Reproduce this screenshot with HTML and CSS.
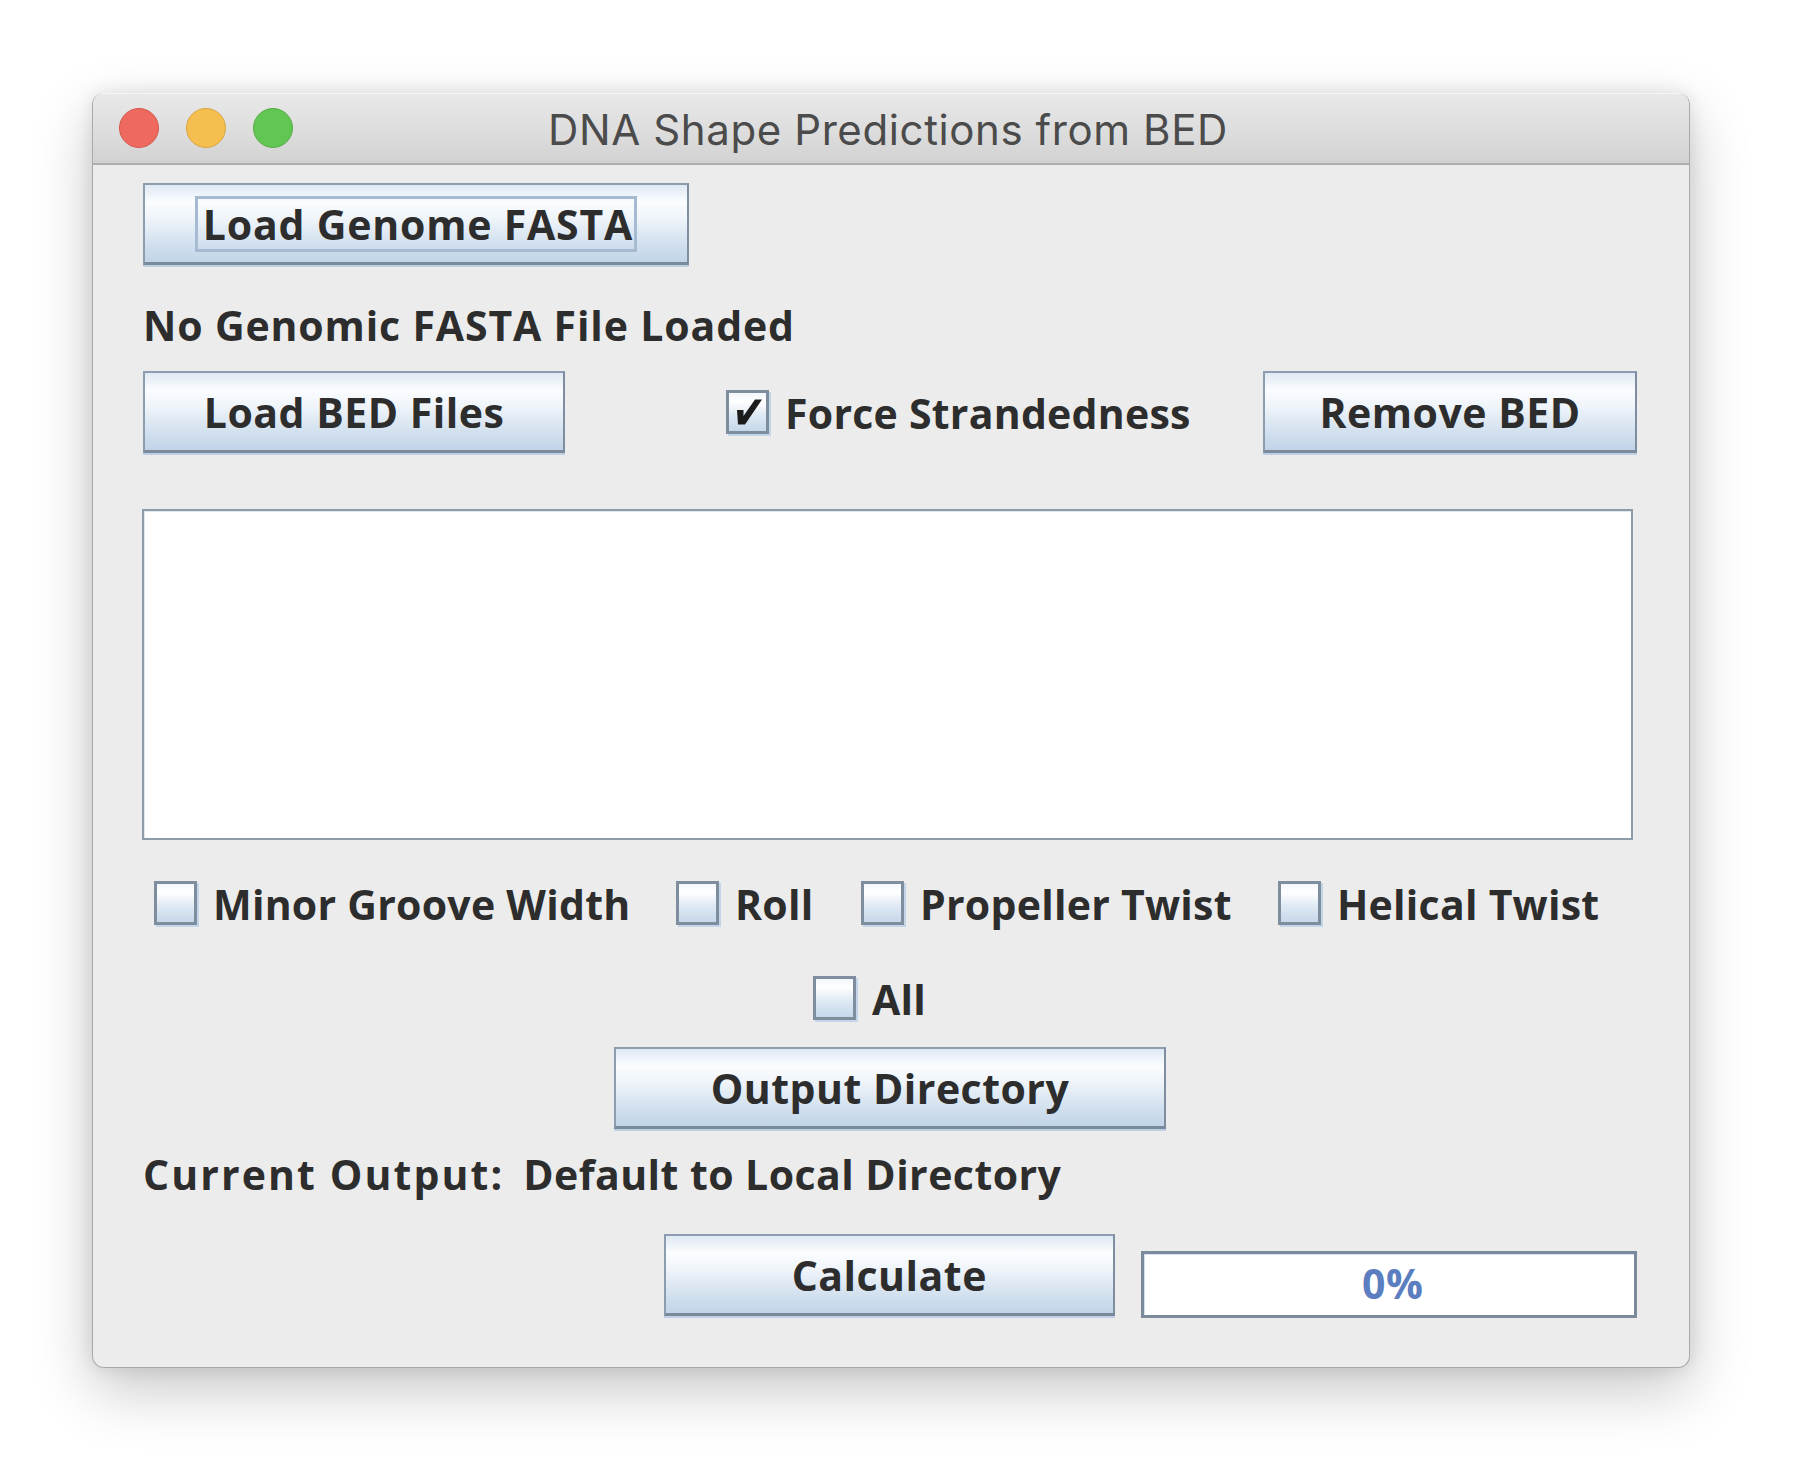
FILE: index.html
```html
<!DOCTYPE html>
<html lang="en">
<head>
<meta charset="utf-8">
<title>DNA Shape Predictions from BED</title>
<link rel="stylesheet" href="styles.css">
</head>
<body>
<div class="window">
  <div class="titlebar">
    <div class="lights">
      <span class="light red"></span>
      <span class="light yellow"></span>
      <span class="light green"></span>
    </div>
    <div class="title">DNA Shape Predictions from BED</div>
    <div></div>
  </div>
  <div class="content">
    <div class="btn btn-genome"><span class="focus">Load Genome FASTA</span></div>
    <div class="label label-genome">No Genomic FASTA File Loaded</div>
    <div class="row-bed">
      <div class="btn btn-bed">Load BED Files</div>
      <div class="check check-force">
        <span class="box checked"><svg viewBox="0 0 43 44" width="43" height="44"><path d="M11 20 L17.5 20 L17.5 26 L29 9.5 L36 9.5 L19 34.5 L12 34.5 Z" fill="#1c1c1c"/></svg></span>
        <span class="check-text">Force Strandedness</span>
      </div>
      <div class="btn btn-remove">Remove BED</div>
    </div>
    <div class="listbox"></div>
    <div class="shape-row">
      <div class="check"><span class="box"></span><span class="check-text">Minor Groove Width</span></div>
      <div class="check"><span class="box"></span><span class="check-text">Roll</span></div>
      <div class="check"><span class="box"></span><span class="check-text">Propeller Twist</span></div>
      <div class="check"><span class="box"></span><span class="check-text">Helical Twist</span></div>
    </div>
    <div class="all-row">
      <div class="check"><span class="box"></span><span class="check-text">All</span></div>
    </div>
    <div class="btn btn-output">Output Directory</div>
    <div class="label label-output"><span class="out-key">Current Output:</span><span class="out-val">Default to Local Directory</span></div>
    <div class="run-row">
      <div class="btn btn-calc">Calculate</div>
      <div class="progress"><span class="progress-text">0%</span></div>
    </div>
  </div>
</div>
</body>
</html>
```

FILE: styles.css
```css
* { box-sizing: border-box; }

html, body {
  margin: 0;
  padding: 0;
  background: #ffffff;
}

body {
  width: 1800px;
  height: 1478px;
  overflow: hidden;
  font-family: "Open Sans", "DejaVu Sans", sans-serif;
}

.window {
  margin: 93px 0 0 92px;
  width: 1598px;
  height: 1275px;
  background: #ececec;
  border: 1px solid #a9a9a9;
  border-top: none;
  border-radius: 12px;
  overflow: hidden;
  box-shadow: 0 22px 60px rgba(0, 0, 0, 0.22), 0 0 18px rgba(0, 0, 0, 0.10);
}

.titlebar {
  height: 72px;
  display: grid;
  grid-template-columns: 1fr auto 1fr;
  align-items: center;
  background: linear-gradient(#e9e9e9 0%, #dcdcdc 60%, #d2d2d2 100%);
  border-bottom: 2px solid #aeaeae;
  box-shadow: inset 0 1px 0 #f5f5f5;
}

.lights {
  display: flex;
  gap: 27px;
  padding-left: 26px;
}

.light {
  width: 40px;
  height: 40px;
  border-radius: 50%;
  display: block;
}
.red { background: #ee6a5f; border: 1px solid #d4574c; }
.yellow { background: #f5bf4f; border: 1px solid #d9a440; }
.green { background: #62c655; border: 1px solid #55ad44; }

.title {
  font-family: "Inter", "Liberation Sans", sans-serif;
  font-size: 42px;
  font-weight: 400;
  color: #4b4b4b;
  padding-top: 2px;
  padding-right: 6px;
  letter-spacing: 0.6px;
}

.content {
  display: flex;
  flex-direction: column;
  padding: 18px 52px 0 50px;
  color: #2d2d2d;
  font-size: 41px;
  font-weight: 700;
  letter-spacing: 0.5px;
}

.btn {
  height: 82px;
  display: flex;
  align-items: center;
  justify-content: center;
  border: 2px solid #8d9db0;
  border-bottom: 3px solid #7a8a9b;
  border-right-color: #7e8ea0;
  background: linear-gradient(#dfe8f3 0%, #fbfdff 22%, #f0f5fa 42%, #d6e3f0 72%, #c1d4e8 100%);
  box-shadow: 0 2px 0 #bed1e4;
  line-height: 42px;
  color: #2d2d2d;
  white-space: nowrap;
}

.btn-genome { width: 546px; }
.focus {
  border: 3px solid #a6bbd1;
  padding: 0 1px 0 5px;
  height: 56px;
  display: flex;
  align-items: center;
  letter-spacing: 0.8px;
}

.label {
  line-height: 42px;
  height: 42px;
  white-space: nowrap;
}
.label-genome { margin-top: 39px; letter-spacing: 0.85px; }

.row-bed {
  margin-top: 25px;
  height: 82px;
  display: flex;
  align-items: center;
}
.btn-bed { width: 422px; }
.check-force { margin-left: 161px; }
.btn-remove { width: 374px; margin-left: auto; }

.check {
  display: flex;
  align-items: center;
  gap: 16px;
  white-space: nowrap;
}
.box {
  width: 43px;
  height: 44px;
  flex: none;
  border: 3px solid #7e8e9f;
  background: linear-gradient(#f2f6fb 0%, #ffffff 22%, #dde8f3 60%, #c6d8ea 100%);
  box-shadow: 2px 2px 0 #c3d5e8;
  position: relative;
}
.box svg {
  position: absolute;
  left: -3px;
  top: -3px;
}
.check-text {
  line-height: 42px;
  padding-top: 2px;
  letter-spacing: 0.25px;
}

.listbox {
  margin-top: 56px;
  height: 331px;
  width: 1491px;
  margin-left: -1px;
  background: #ffffff;
  border: 2px solid #8e9ba8;
  box-shadow: inset 1px 1px 0 #dfe7ef;
}

.shape-row {
  margin-top: 41px;
  display: grid;
  grid-template-columns: 522px 185px 417px auto;
  padding-left: 11px;
}

.all-row {
  margin-top: 51px;
  padding-left: 670px;
  display: flex;
}

.btn-output {
  margin-top: 27px;
  width: 552px;
  align-self: center;
}

.label-output { margin-top: 24px; display: flex; gap: 19px; }
.out-key { letter-spacing: 2.1px; }
.out-val { letter-spacing: 0.45px; }

.run-row {
  margin-top: 39px;
  display: flex;
  align-items: flex-end;
  padding-left: 521px;
  gap: 26px;
}
.btn-calc { width: 451px; }

.progress {
  width: 497px;
  height: 67px;
  margin-bottom: -2px;
  border: 3px solid #7c8b9c;
  background: #ffffff;
  box-shadow: inset 1px 1px 0 #d5e0ec;
  display: flex;
  align-items: center;
  justify-content: center;
}
.progress-text {
  color: #5b7ec0;
  line-height: 42px;
  padding-bottom: 3px;
  padding-left: 8px;
}
```
